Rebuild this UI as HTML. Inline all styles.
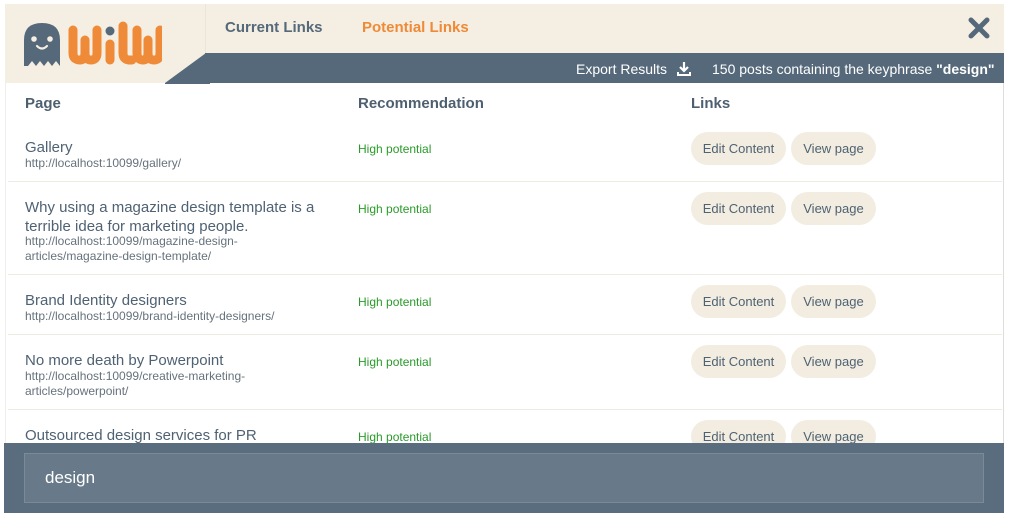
<!DOCTYPE html>
<html><head><meta charset="utf-8"><style>
*{margin:0;padding:0;box-sizing:border-box}
body{width:1009px;height:518px;background:#fff;font-family:"Liberation Sans",Arial,sans-serif;position:relative;overflow:hidden;color:#56697a}
.a{position:absolute;white-space:nowrap}
.hdr{left:5px;top:4px;width:999px;height:79px;background:#f4efe2}
.bar{left:205px;top:53px;width:799px;height:30px;background:#55697a}
.tab{top:19px;font-size:15px;font-weight:bold}
.th{top:95px;font-size:15px;font-weight:bold;color:#4e6070}
.t{font-size:15px;color:#4f6273;line-height:19px}
.u{font-size:12px;color:#66727c;line-height:15px}
.hp{font-size:12px;color:#2a9a2a}
.btn{height:33px;border-radius:17px;background:#f2ede0;font-size:13px;color:#4f6273;line-height:33px;text-align:center}
.sep{left:8px;width:994px;height:1px;background:#eeebe3}
</style></head><body>
<div class="a hdr"></div>
<div class="a" style="left:205px;top:4px;width:1px;height:49px;background:#ebe5d5"></div>
<div class="a bar"></div>
<svg class="a" style="left:160px;top:53px" width="50" height="31"><polygon points="5,30 46,0 50,0 50,31 5,31" fill="#55697a"/></svg>
<svg class="a" style="left:22px;top:20px" width="140" height="50">
<path d="M2 46 V20 Q2 3 20 3 Q38 3 38 20 V46 L34 41 L30 46 L26 41 L22 46 L18 41 L14 46 L10 41 L6 46 Z" fill="#56697a"/>
<circle cx="12" cy="19" r="2.8" fill="#f4efe2"/><circle cx="28" cy="19" r="2.8" fill="#f4efe2"/>
<path d="M15 26 Q20 31 25 26" stroke="#f4efe2" stroke-width="2.2" fill="none" stroke-linecap="round"/>
<g stroke="#ef8a38" stroke-width="9" fill="none" stroke-linecap="round" stroke-linejoin="round">
<path d="M51 10 V33 Q51 40 58 40 Q63 40 63 33 V20 M63 33 Q63 40 69 40 Q75 40 75 33 V10"/>
<path d="M88 24 V40"/>
<path d="M101 6 V33 Q101 40 108 40 H110"/>
<path d="M115 10 V33 Q115 40 121 40 Q126 40 126 33 V20 M126 33 Q126 40 132 40 Q138 40 138 33 V10"/>
</g>
<circle cx="88" cy="11" r="4.5" fill="#56697a"/>
</svg>
<div class="a tab" style="left:225px;color:#55697a">Current Links</div>
<div class="a tab" style="left:362px;color:#ef8a38">Potential Links</div>
<svg class="a" style="left:968px;top:17px" width="22" height="22"><path d="M3 3 L19 19 M19 3 L3 19" stroke="#55697a" stroke-width="5" stroke-linecap="round"/></svg>
<div class="a" style="left:576px;top:61px;font-size:14px;color:#fff">Export Results</div>
<svg class="a" style="left:676px;top:60px" width="16" height="17"><path d="M8 2 V11 M4 7 L8 11 L12 7" stroke="#fff" stroke-width="2.2" fill="none"/><path d="M2 12 V15 H14 V12" stroke="#fff" stroke-width="2" fill="none"/></svg>
<div class="a" style="left:712px;top:61px;font-size:14px;color:#fff">150 posts containing the keyphrase <b>"design"</b></div>
<div class="a" style="left:1003px;top:83px;width:1px;height:360px;background:#ddd"></div>
<div class="a" style="left:5px;top:83px;width:1px;height:360px;background:#eee"></div>
<div class="a th" style="left:25px">Page</div>
<div class="a th" style="left:358px">Recommendation</div>
<div class="a th" style="left:691px">Links</div>

<div class="a t" style="left:25px;top:138px">Gallery</div>
<div class="a u" style="left:25px;top:156px">http://localhost:10099/gallery/</div>
<div class="a hp" style="left:358px;top:142px">High potential</div>
<div class="a btn" style="left:691px;top:132px;width:95px">Edit Content</div>
<div class="a btn" style="left:791px;top:132px;width:85px">View page</div>
<div class="a sep" style="top:181px"></div>

<div class="a t" style="left:25px;top:198px">Why using a magazine design template is a<br>terrible idea for marketing people.</div>
<div class="a u" style="left:25px;top:234px">http://localhost:10099/magazine-design-<br>articles/magazine-design-template/</div>
<div class="a hp" style="left:358px;top:202px">High potential</div>
<div class="a btn" style="left:691px;top:192px;width:95px">Edit Content</div>
<div class="a btn" style="left:791px;top:192px;width:85px">View page</div>
<div class="a sep" style="top:274px"></div>

<div class="a t" style="left:25px;top:291px">Brand Identity designers</div>
<div class="a u" style="left:25px;top:309px">http://localhost:10099/brand-identity-designers/</div>
<div class="a hp" style="left:358px;top:295px">High potential</div>
<div class="a btn" style="left:691px;top:285px;width:95px">Edit Content</div>
<div class="a btn" style="left:791px;top:285px;width:85px">View page</div>
<div class="a sep" style="top:334px"></div>

<div class="a t" style="left:25px;top:351px">No more death by Powerpoint</div>
<div class="a u" style="left:25px;top:369px">http://localhost:10099/creative-marketing-<br>articles/powerpoint/</div>
<div class="a hp" style="left:358px;top:355px">High potential</div>
<div class="a btn" style="left:691px;top:345px;width:95px">Edit Content</div>
<div class="a btn" style="left:791px;top:345px;width:85px">View page</div>
<div class="a sep" style="top:409px"></div>

<div class="a t" style="left:25px;top:426px">Outsourced design services for PR</div>
<div class="a hp" style="left:358px;top:430px">High potential</div>
<div class="a btn" style="left:691px;top:420px;width:95px">Edit Content</div>
<div class="a btn" style="left:791px;top:420px;width:85px">View page</div>

<div class="a" style="left:4px;top:443px;width:1000px;height:70px;background:#5a6d7e"></div>
<div class="a" style="left:24px;top:453px;width:960px;height:50px;background:#687a89;border:1px solid #7a8b98"></div>
<div class="a" style="left:45px;top:468px;font-size:17px;color:#fff">design</div>
</body></html>
